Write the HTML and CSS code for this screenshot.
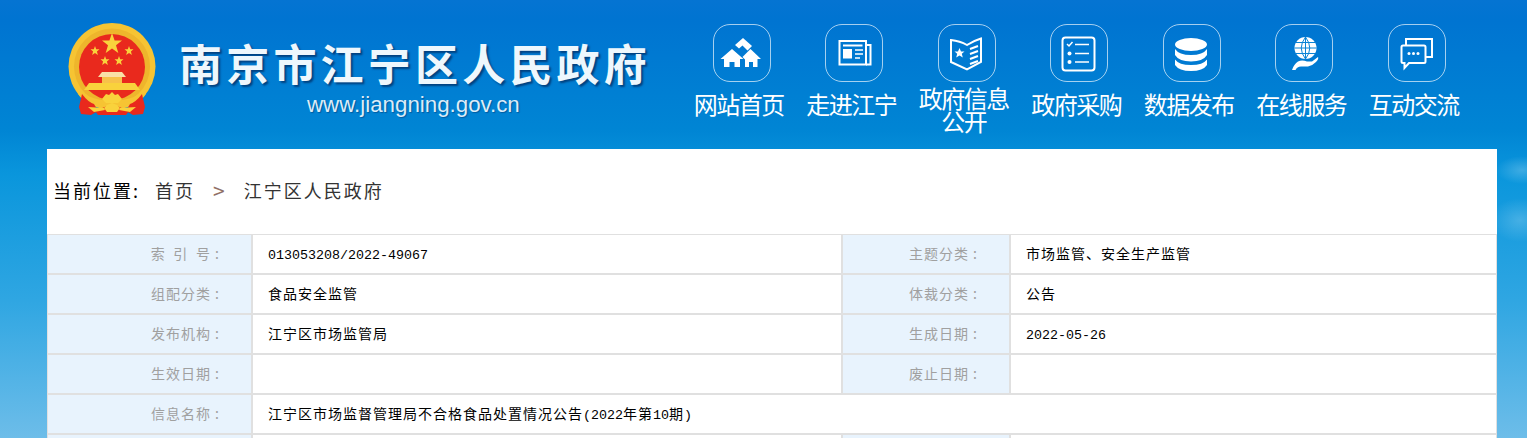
FILE: index.html
```html
<!DOCTYPE html>
<html lang="zh-CN">
<head>
<meta charset="utf-8">
<title>南京市江宁区人民政府</title>
<link rel="stylesheet" href="styles.css">
</head>
<body>
<header class="header">
  <div class="brand">
    <svg class="emblem" viewBox="0 0 88 94" aria-hidden="true">
      <circle cx="44" cy="43.500" r="43.500" fill="#f6c433"/>
      <circle cx="44" cy="43.500" r="38" fill="#eeb52c"/>
      <circle cx="44" cy="44" r="33" fill="#e9291d"/>
      <polygon fill="#f9d23c" points="44,10 46.600,17.500 54,17.500 48,22.300 50.300,30 44,25.400 37.700,30 40,22.300 34,17.500 41.400,17.500"/>
      <polygon fill="#f9d23c" points="27,23 28.200,26.300 31.500,26.300 28.900,28.400 29.900,32 27,30 24.100,32 25.100,28.400 22.500,26.300 25.800,26.300"/>
      <polygon fill="#f9d23c" points="61,23 62.200,26.300 65.500,26.300 62.900,28.400 63.900,32 61,30 58.100,32 59.100,28.400 56.500,26.300 59.800,26.300"/>
      <polygon fill="#f9d23c" points="37,33 38.200,36.300 41.500,36.300 38.900,38.400 39.900,42 37,40 34.100,42 35.100,38.400 32.500,36.300 35.800,36.300"/>
      <polygon fill="#f9d23c" points="51,33 52.200,36.300 55.500,36.300 52.900,38.400 53.900,42 51,40 48.100,42 49.100,38.400 46.500,36.300 49.800,36.300"/>
      <path fill="#f9e0a8" d="M30 54 L34 49 H54 L58 54z"/>
      <rect fill="#f7c24a" x="34" y="54" width="20" height="6"/>
      <path fill="#f9d23c" d="M21 60 H67 L72 67 H16z"/>
      <path fill="#f6c433" d="M9 64 Q18 77 44 78 Q70 77 79 64 L78 71 Q70 84 44 84 Q18 84 10 71z"/>
      <path fill="#e9291d" d="M14 71 Q20 79 26 81 L30 88 L23 92 L13 91 L11 84z"/>
      <path fill="#e9291d" d="M74 71 Q68 79 62 81 L58 88 L65 92 L75 91 L77 84z"/>
      <path fill="#e9291d" d="M27 88 L44 81 L61 88 L58 92 H30z"/>
      <path fill="#f9d23c" d="M34 76 L38 71 L41 72 L44 69 L47 72 L50 71 L54 76 L50 80 H38z"/>
      <path fill="#f9d23c" d="M36 85 L39 82 L44 80 L49 82 L52 85 L49 89 H39z"/>
      <path fill="#f9d23c" d="M20 84 L36 85 L37 87 L26 89z"/>
      <path fill="#f9d23c" d="M68 84 L52 85 L51 87 L62 89z"/>
    </svg>
    <div class="brand-text">
      <div class="site-title">南京市江宁区人民政府</div>
      <div class="site-url">www.jiangning.gov.cn</div>
    </div>
  </div>
  <nav class="nav">
    <a class="nav-item">
      <span class="nav-icon">
        <svg viewBox="0 0 58 58" aria-hidden="true">
          <path class="ic-fill" d="M31 14 L40 22 L35.500 26.500 L30.500 21.500 L27 24.500 L23 21z"/>
          <path class="ic-fill" d="M20 25 L31.500 35 H28 V43 H22.500 V38 H17.500 V43 H12 V35 H8.500z"/>
          <path class="ic-fill" d="M38.500 25 L49 35 H45.500 V43 H41 V38 H37 V43 H33 V35.500 L30.500 33z"/>
        </svg>
      </span>
      <span class="nav-label">网站首页</span>
    </a>
    <a class="nav-item">
      <span class="nav-icon">
        <svg viewBox="0 0 58 58" aria-hidden="true">
          <path class="ic-line" d="M14.500 17 H41 V40.500 H14.500z"/>
          <path class="ic-line" d="M41 21 H45.500 V40.500 H41"/>
          <path class="ic-line" d="M18 21.500 H37.500"/>
          <rect class="ic-fill" x="18" y="25" width="9" height="9.500"/>
          <path class="ic-thin" d="M30 26 H38 M30 30 H38 M30 34 H35"/>
        </svg>
      </span>
      <span class="nav-label">走进江宁</span>
    </a>
    <a class="nav-item">
      <span class="nav-icon">
        <svg viewBox="0 0 58 58" aria-hidden="true">
          <path class="ic-line" d="M14 16 Q23 17 30 21 Q36 17 44 14.500 V38 L30 45.500 L14 38z"/>
          <polygon class="ic-fill" points="22.500,24 24,27.500 27.500,27.500 24.800,29.800 25.800,33.500 22.500,31.400 19.200,33.500 20.200,29.800 17.500,27.500 21,27.500"/>
          <path class="ic-line" d="M33 25 L41 22 M33 30 L41 27 M33 35 L41 32 M33 40 L41 37"/>
        </svg>
      </span>
      <span class="nav-label nav-label-two">政府信息公开</span>
    </a>
    <a class="nav-item">
      <span class="nav-icon">
        <svg viewBox="0 0 58 58" aria-hidden="true">
          <rect class="ic-line" x="12.500" y="13.500" width="32" height="33" rx="3"/>
          <path class="ic-thin" d="M17 20 L19 22 L22.500 18 M25 20.500 H39 M25 29.500 H39 M25 38 H39"/>
          <circle class="ic-fill" cx="19.500" cy="29.500" r="2"/>
          <circle class="ic-fill" cx="19.500" cy="38" r="2"/>
        </svg>
      </span>
      <span class="nav-label">政府采购</span>
    </a>
    <a class="nav-item">
      <span class="nav-icon">
        <svg viewBox="0 0 58 58" aria-hidden="true">
          <ellipse class="ic-fill" cx="29" cy="20.500" rx="16" ry="6.500"/>
          <path class="ic-fill" d="M13 25 Q17 31 29 31 Q41 31 45 25 V31 Q41 37.500 29 37.500 Q17 37.500 13 31z"/>
          <path class="ic-fill" d="M13 35.500 Q17 41 29 41 Q41 41 45 35.500 V41 Q41 47 29 47 Q17 47 13 41z"/>
        </svg>
      </span>
      <span class="nav-label">数据发布</span>
    </a>
    <a class="nav-item">
      <span class="nav-icon">
        <svg viewBox="0 0 58 58" aria-hidden="true">
          <circle class="ic-fill" cx="30.500" cy="24" r="11"/>
          <path class="ic-grid" d="M19.500 24 H41.500 M21 18.500 H40 M21 29.500 H40 M30.500 13 V35 M30.500 13 Q22 24 30.500 35 M30.500 13 Q39 24 30.500 35"/>
          <path class="ic-fill" d="M17 46 Q19 40 23 37.500 Q27 35.500 32 37.500 H37 L43 33 Q44 35 41 38 Q37 42 33 42.500 H26 Q22 42.500 20.500 46z"/>
        </svg>
      </span>
      <span class="nav-label">在线服务</span>
    </a>
    <a class="nav-item">
      <span class="nav-icon">
        <svg viewBox="0 0 58 58" aria-hidden="true">
          <path class="ic-line" d="M14.500 23 Q14.500 21.500 16 21.500 H37 Q38.500 21.500 38.500 23 V37.500 Q38.500 39 37 39 H22 L17.500 44 V39 H16 Q14.500 39 14.500 37.500z"/>
          <path class="ic-line" d="M19 21.500 V15 H45 V33 H38.500"/>
          <circle class="ic-fill" cx="22" cy="29.500" r="1.500"/>
          <circle class="ic-fill" cx="26.500" cy="29.500" r="1.500"/>
          <circle class="ic-fill" cx="31" cy="29.500" r="1.500"/>
        </svg>
      </span>
      <span class="nav-label">互动交流</span>
    </a>
  </nav>
</header>
<main class="content">
  <div class="crumbs">
    <span class="crumb-lead">当前位置:</span>
    <a class="crumb-link">首页</a>
    <span class="crumb-sep">&gt;</span>
    <a class="crumb-link">江宁区人民政府</a>
  </div>
  <table class="meta">
    <colgroup>
      <col class="col-a"><col class="col-b"><col class="col-c"><col class="col-d">
    </colgroup>
    <tr>
      <th class="th-spaced">索 引 号<span class="colon">:</span></th><td><span class="num">013053208/2022-49067</span></td>
      <th>主题分类<span class="colon">:</span></th><td>市场监管、安全生产监管</td>
    </tr>
    <tr>
      <th>组配分类<span class="colon">:</span></th><td>食品安全监管</td>
      <th>体裁分类<span class="colon">:</span></th><td>公告</td>
    </tr>
    <tr>
      <th>发布机构<span class="colon">:</span></th><td>江宁区市场监管局</td>
      <th>生成日期<span class="colon">:</span></th><td><span class="num">2022-05-26</span></td>
    </tr>
    <tr>
      <th>生效日期<span class="colon">:</span></th><td></td>
      <th>废止日期<span class="colon">:</span></th><td></td>
    </tr>
    <tr>
      <th>信息名称<span class="colon">:</span></th>
      <td colspan="3">江宁区市场监督管理局不合格食品处置情况公告<span class="num">(2022</span>年第<span class="num">10</span>期<span class="num">)</span></td>
    </tr>
    <tr>
      <th></th><td></td><th></th><td></td>
    </tr>
  </table>
</main>
</body>
</html>
```
FILE: styles.css
```css
* { box-sizing: border-box; }
html, body { margin: 0; height: 100%; overflow: hidden; }
body {
  font-family: "Noto Sans CJK SC", "Liberation Sans", sans-serif;
  background:
    radial-gradient(ellipse 26px 14px at 1522px 170px, rgba(255,255,255,.22), transparent),
    radial-gradient(ellipse 30px 22px at 1520px 220px, rgba(255,255,255,.2), transparent),
    linear-gradient(180deg, #0574d2 0, #0074d1 20px, #0085d4 130px, #0a96dc 175px, #2fa6e2 300px, #6dbde9 438px);
}
.header { display: flex; height: 149px; padding-left: 68px; }
.brand { display: flex; width: 617.5px; padding-top: 23px; }
.emblem { width: 88px; height: 94px; flex: none; }
.brand-text { margin-left: 23px; }
.site-title {
  margin-top: -3px;
  font-size: 43px;
  line-height: 84px;
  height: 75px;
  font-weight: 700;
  letter-spacing: 4.2px;
  white-space: nowrap;
  color: #eef7fd;
  text-shadow: 2px 2px 2px rgba(0, 45, 100, .75);
}
.site-url {
  padding-left: 128px;
  font-family: "Liberation Sans", sans-serif;
  font-size: 22.3px;
  line-height: 20px;
  white-space: nowrap;
  color: #dcecf8;
  text-shadow: 1px 1px 1px rgba(0, 45, 100, .45);
}
.nav { display: flex; }
.nav-item {
  width: 112.5px;
  padding-top: 24px;
  display: flex;
  flex-direction: column;
  align-items: center;
  color: #fff;
}
.nav-icon {
  width: 58px;
  height: 58px;
  flex: none;
  border: 1.5px solid rgba(255, 255, 255, .65);
  border-radius: 17px;
}
.nav-icon svg { display: block; width: 58px; height: 58px; margin: -1.5px; }
.ic-fill { fill: #fff; }
.ic-line { fill: none; stroke: #fff; stroke-width: 2; }
.ic-thin { fill: none; stroke: #fff; stroke-width: 1.5; }
.ic-grid { fill: none; stroke: #0a84d6; stroke-width: 1; }
.nav-label {
  width: 92px;
  margin-top: 10px;
  margin-right: 6px;
  font-size: 24px;
  line-height: 24px;
  letter-spacing: -1.5px;
  text-align: center;
}
.nav-label-two { margin-top: 4px; line-height: 23px; }
.content { width: 1450px; margin-left: 47px; background: #fff; }
.crumbs {
  display: flex;
  align-items: center;
  height: 85px;
  padding: 0 0 4px 6px;
  font-size: 18px;
}
.crumb-lead { width: 102px; color: #000; letter-spacing: 2px; }
.crumb-link { color: #333; letter-spacing: 2px; }
.crumb-sep {
  margin: 0 19px 0 18px;
  font-size: 21px;
  color: #8f6f66;
  letter-spacing: 0;
}
.meta {
  width: 1450px;
  table-layout: fixed;
  border-collapse: separate;
  border-spacing: 0;
  border-top: 1px solid #e0e0e0;
  border-left: 1px solid #e0e0e0;
  border-right: 1px solid #e0e0e0;
  font-size: 14px;
  letter-spacing: 1px;
}
.col-a { width: 205px; }
.col-b { width: 590px; }
.col-c { width: 168px; }
.meta th, .meta td {
  height: 40px;
  padding: 0 0 2px;
  border-bottom: 2px solid #e0e0e0;
  font-weight: 400;
}
.meta th {
  padding-right: 30px;
  background: #e8f3fd;
  border-right: 2px solid #e0e0e0;
  color: #a0a0a0;
  text-align: right;
}
.meta .th-spaced { word-spacing: 3.500px; }
.colon { display: inline-block; width: 8px; text-align: center; margin-left: 2px; letter-spacing: 0; }
.meta td { padding-left: 15px; color: #000; border-right: 2px solid #e0e0e0; }
.meta td:last-child { border-right: 0; }
.num { font-family: "Liberation Mono", monospace; font-size: 13.33px; letter-spacing: 0; }
```
